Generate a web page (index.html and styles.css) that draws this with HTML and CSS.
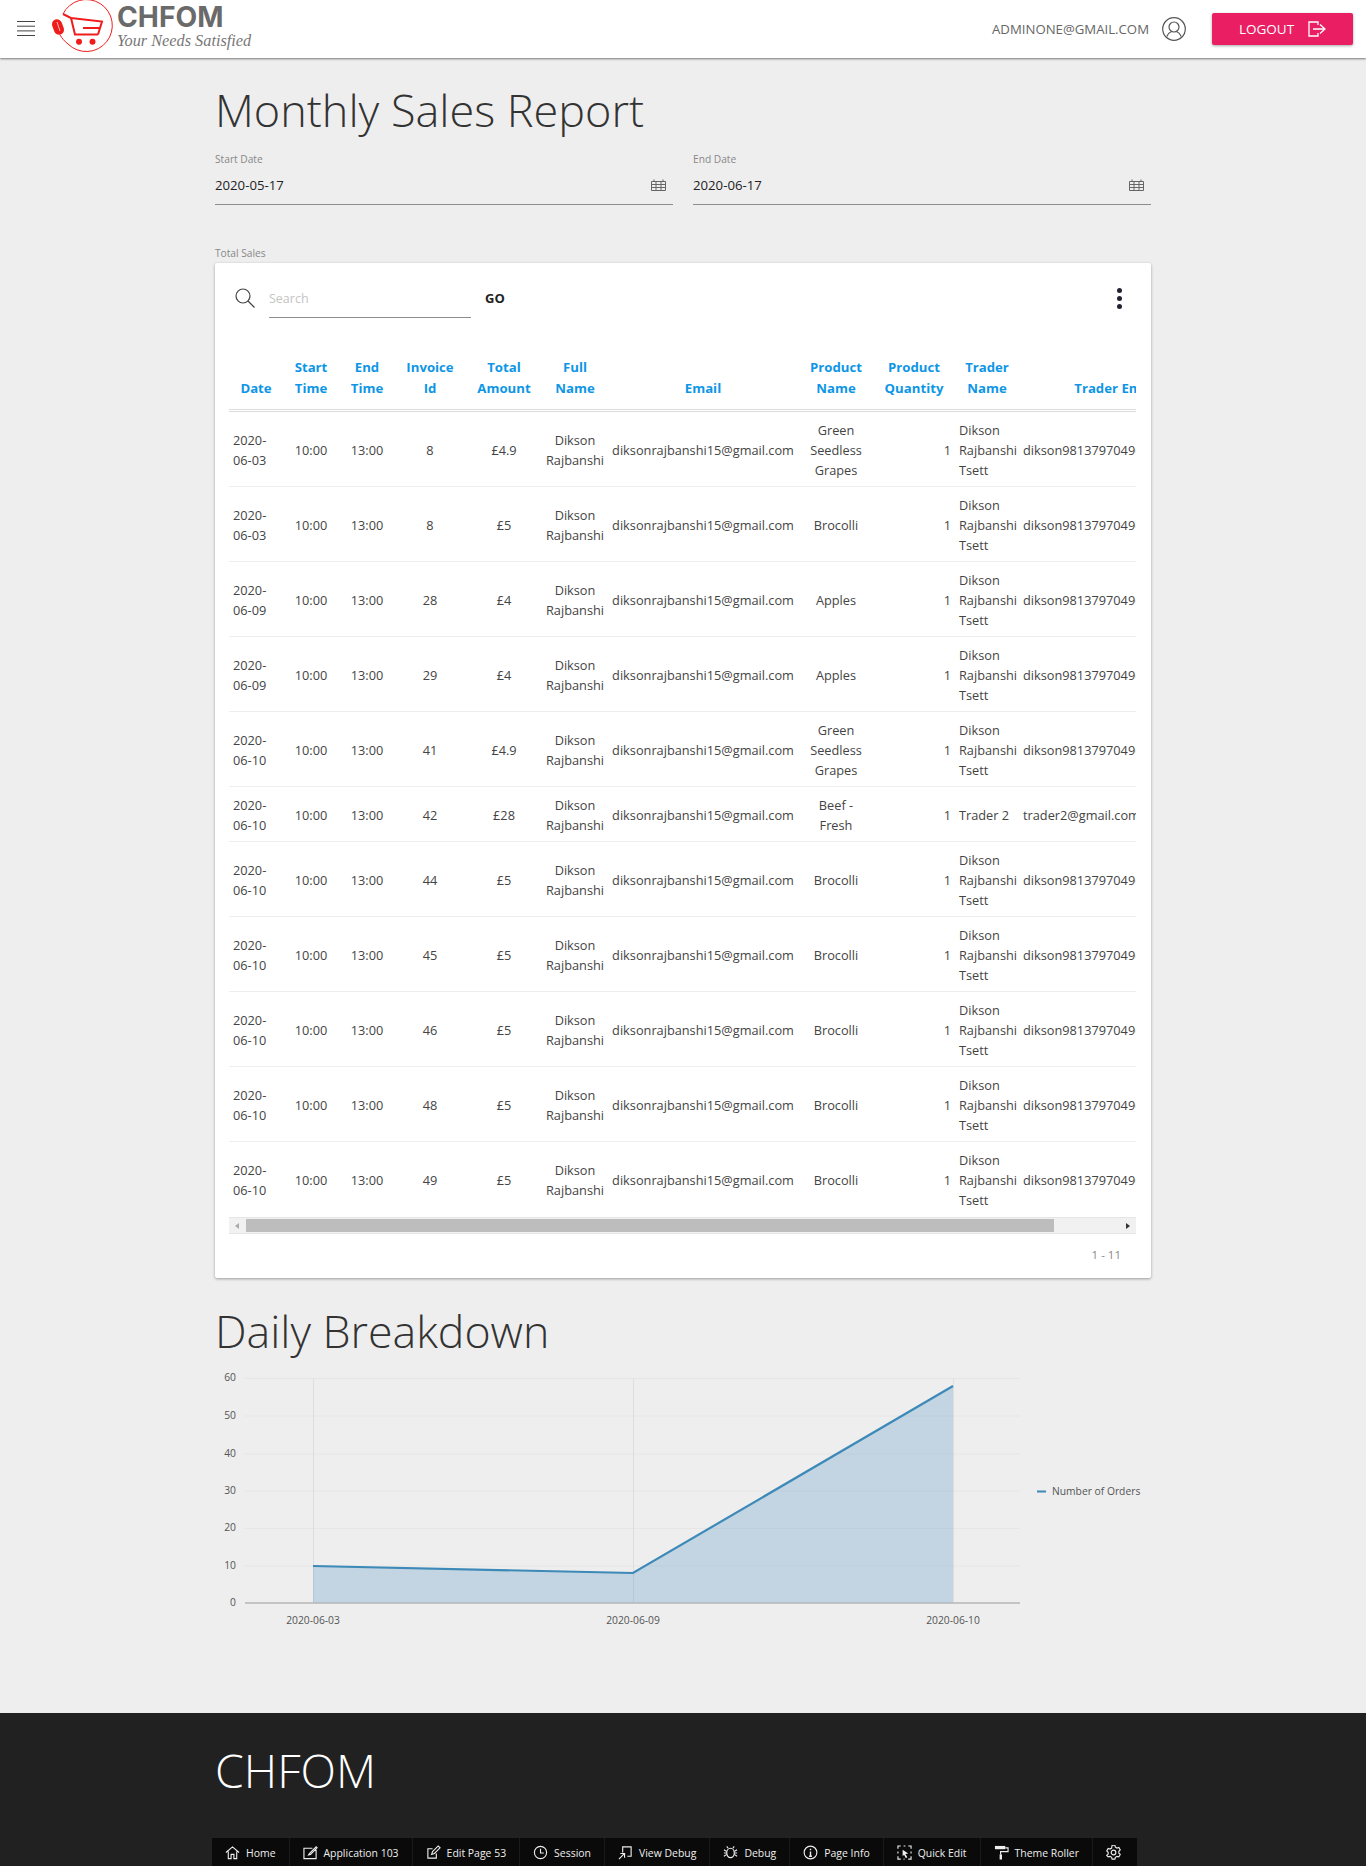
FILE: index.html
```html
<!DOCTYPE html>
<html lang="en">
<head>
<meta charset="utf-8">
<title>Monthly Sales Report</title>
<link rel="stylesheet" href="styles.css">
</head>
<body>
<header class="topbar">
  <svg class="burger" viewBox="0 0 18 16" width="18" height="16"><path d="M0 .5h18M0 5.200h18M0 9.900h18M0 14.500h18" stroke="#444" stroke-width="1"/></svg>
  <svg class="logo-mark" viewBox="0 0 70 58" width="70" height="58">
    <path d="M13 14A26 26 0 1 1 18 44C14 41 12 38 10 35" fill="none" stroke="#f01c1c" stroke-width="1"/>
    <path d="M13 14l8 4 4 16.500h23M21 18l31 3.500-4 13M31 21.500v0M33 28h17" fill="none" stroke="#f01c1c" stroke-width="2"/>
    <circle cx="29" cy="41.700" r="3" fill="#f01c1c"/><circle cx="42.500" cy="41.700" r="3" fill="#f01c1c"/>
    <rect x="3" y="19" width="10" height="16" rx="5" fill="#f01c1c" transform="rotate(-20 8 27)"/>
    <path d="M7 22l3 9" fill="none" stroke="#fff" stroke-width=".7"/>
  </svg>
  <div class="logo-text">
    <span class="logo-name">CHFOM</span>
    <span class="logo-tag">Your Needs Satisfied</span>
  </div>
  <span class="user-mail">ADMINONE@GMAIL.COM</span>
  <svg class="user-icon" viewBox="0 0 24 24" width="24" height="24" fill="none" stroke="#555" stroke-width="1.200"><circle cx="12" cy="12" r="11.300"/><circle cx="12" cy="10" r="5"/><path d="M4.800 19.500c1-3 3.500-4.500 4.700-5M19.200 19.500c-1-3-3.500-4.500-4.700-5"/></svg>
  <button class="logout">LOGOUT
    <svg viewBox="0 0 18 16" width="18" height="16" fill="none" stroke="#fff" stroke-width="1.300"><path d="M10 4V1H1v14h9v-3"/><path d="M5 8h11M12 3.500L17 8l-5 4.500"/></svg>
  </button>
</header>

<main class="content">
  <h1 class="page-title">Monthly Sales Report</h1>
  <div class="date-row">
    <div class="field">
      <label class="field-label">Start Date</label>
      <div class="field-box"><span>2020-05-17</span>
        <svg viewBox="0 0 15 12" width="15" height="12" fill="none" stroke="#666" stroke-width="1"><path d="M.5 2.500h14v9H.5zM.5 5.500h14M.5 8.500h14M5 2.500v9M10 2.500v9M3 .5v2M12 .5v2"/></svg>
      </div>
    </div>
    <div class="field">
      <label class="field-label">End Date</label>
      <div class="field-box"><span>2020-06-17</span>
        <svg viewBox="0 0 15 12" width="15" height="12" fill="none" stroke="#666" stroke-width="1"><path d="M.5 2.500h14v9H.5zM.5 5.500h14M.5 8.500h14M5 2.500v9M10 2.500v9M3 .5v2M12 .5v2"/></svg>
      </div>
    </div>
  </div>

  <div class="region-label">Total Sales</div>
  <section class="card">
    <div class="toolbar">
      <svg class="search-icon" viewBox="0 0 20 20" width="20" height="20" fill="none" stroke="#444" stroke-width="1.200"><circle cx="8" cy="8" r="7"/><path d="M13 13l6.500 6.500"/></svg>
      <span class="search-input">Search</span>
      <span class="go">GO</span>
      <span class="kebab"><i></i><i></i><i></i></span>
    </div>
    <div class="table-wrap">
      <table class="report">
        <colgroup>
          <col class="c-date"><col class="c-time"><col class="c-time"><col class="c-inv"><col class="c-amt"><col class="c-name"><col class="c-mail"><col class="c-prod"><col class="c-qty"><col class="c-name"><col class="c-tmail">
        </colgroup>
        <thead>
          <tr><th>Date</th><th>Start Time</th><th>End Time</th><th>Invoice Id</th><th>Total Amount</th><th>Full Name</th><th>Email</th><th>Product Name</th><th>Product Quantity</th><th>Trader Name</th><th>Trader Email</th></tr>
        </thead>
        <tbody>
          <tr><td class="l">2020-06-03</td><td>10:00</td><td>13:00</td><td>8</td><td>£4.9</td><td class="tight">Dikson Rajbanshi</td><td class="tight">diksonrajbanshi15@gmail.com</td><td>Green Seedless Grapes</td><td class="r">1</td><td class="l tn">Dikson Rajbanshi Tsett</td><td class="l">dikson9813797049@gmail.com</td></tr>
          <tr><td class="l">2020-06-03</td><td>10:00</td><td>13:00</td><td>8</td><td>£5</td><td class="tight">Dikson Rajbanshi</td><td class="tight">diksonrajbanshi15@gmail.com</td><td>Brocolli</td><td class="r">1</td><td class="l tn">Dikson Rajbanshi Tsett</td><td class="l">dikson9813797049@gmail.com</td></tr>
          <tr><td class="l">2020-06-09</td><td>10:00</td><td>13:00</td><td>28</td><td>£4</td><td class="tight">Dikson Rajbanshi</td><td class="tight">diksonrajbanshi15@gmail.com</td><td>Apples</td><td class="r">1</td><td class="l tn">Dikson Rajbanshi Tsett</td><td class="l">dikson9813797049@gmail.com</td></tr>
          <tr><td class="l">2020-06-09</td><td>10:00</td><td>13:00</td><td>29</td><td>£4</td><td class="tight">Dikson Rajbanshi</td><td class="tight">diksonrajbanshi15@gmail.com</td><td>Apples</td><td class="r">1</td><td class="l tn">Dikson Rajbanshi Tsett</td><td class="l">dikson9813797049@gmail.com</td></tr>
          <tr><td class="l">2020-06-10</td><td>10:00</td><td>13:00</td><td>41</td><td>£4.9</td><td class="tight">Dikson Rajbanshi</td><td class="tight">diksonrajbanshi15@gmail.com</td><td>Green Seedless Grapes</td><td class="r">1</td><td class="l tn">Dikson Rajbanshi Tsett</td><td class="l">dikson9813797049@gmail.com</td></tr>
          <tr><td class="l">2020-06-10</td><td>10:00</td><td>13:00</td><td>42</td><td>£28</td><td class="tight">Dikson Rajbanshi</td><td class="tight">diksonrajbanshi15@gmail.com</td><td>Beef - Fresh</td><td class="r">1</td><td class="l tn">Trader 2</td><td class="l">trader2@gmail.com</td></tr>
          <tr><td class="l">2020-06-10</td><td>10:00</td><td>13:00</td><td>44</td><td>£5</td><td class="tight">Dikson Rajbanshi</td><td class="tight">diksonrajbanshi15@gmail.com</td><td>Brocolli</td><td class="r">1</td><td class="l tn">Dikson Rajbanshi Tsett</td><td class="l">dikson9813797049@gmail.com</td></tr>
          <tr><td class="l">2020-06-10</td><td>10:00</td><td>13:00</td><td>45</td><td>£5</td><td class="tight">Dikson Rajbanshi</td><td class="tight">diksonrajbanshi15@gmail.com</td><td>Brocolli</td><td class="r">1</td><td class="l tn">Dikson Rajbanshi Tsett</td><td class="l">dikson9813797049@gmail.com</td></tr>
          <tr><td class="l">2020-06-10</td><td>10:00</td><td>13:00</td><td>46</td><td>£5</td><td class="tight">Dikson Rajbanshi</td><td class="tight">diksonrajbanshi15@gmail.com</td><td>Brocolli</td><td class="r">1</td><td class="l tn">Dikson Rajbanshi Tsett</td><td class="l">dikson9813797049@gmail.com</td></tr>
          <tr><td class="l">2020-06-10</td><td>10:00</td><td>13:00</td><td>48</td><td>£5</td><td class="tight">Dikson Rajbanshi</td><td class="tight">diksonrajbanshi15@gmail.com</td><td>Brocolli</td><td class="r">1</td><td class="l tn">Dikson Rajbanshi Tsett</td><td class="l">dikson9813797049@gmail.com</td></tr>
          <tr class="last"><td class="l">2020-06-10</td><td>10:00</td><td>13:00</td><td>49</td><td>£5</td><td class="tight">Dikson Rajbanshi</td><td class="tight">diksonrajbanshi15@gmail.com</td><td>Brocolli</td><td class="r">1</td><td class="l tn">Dikson Rajbanshi Tsett</td><td class="l">dikson9813797049@gmail.com</td></tr>
        </tbody>
      </table>
    </div>
    <div class="scrollbar">
      <span class="arrow-l"></span>
      <span class="track"><span class="thumb"></span></span>
      <span class="arrow-r"></span>
    </div>
    <div class="pager">1 - 11</div>
  </section>

  <h2 class="page-title section-title">Daily Breakdown</h2>
  <svg class="chart" viewBox="215 1370 936 270" width="936" height="270">
    <g stroke="#e6e6e6" stroke-width="1">
      <path d="M245 1378.500H1020M245 1416H1020M245 1454H1020M245 1491H1020M245 1528.500H1020M245 1566H1020"/>
    </g>
    <path d="M313.500 1378V1603M633.500 1378V1603M953.500 1378V1603" stroke="#dcdde0" stroke-width="1"/>
    <path d="M313 1566L633 1573L953 1386V1603H313Z" fill="#3580b8" fill-opacity=".23"/>
    <path d="M313 1566L633 1573L953 1386" fill="none" stroke="#3d89b8" stroke-width="2.200"/>
    <path d="M245 1603H1020" stroke="#b4b6b9" stroke-width="1.500"/>
    <g class="axis-y">
      <text x="236" y="1381">60</text><text x="236" y="1419">50</text><text x="236" y="1457">40</text><text x="236" y="1494">30</text><text x="236" y="1531">20</text><text x="236" y="1569">10</text><text x="236" y="1606">0</text>
    </g>
    <g class="axis-x">
      <text x="313" y="1624">2020-06-03</text><text x="633" y="1624">2020-06-09</text><text x="953" y="1624">2020-06-10</text>
    </g>
    <path d="M1037 1491.500h9" stroke="#3d89b8" stroke-width="2"/>
    <text class="legend" x="1052" y="1495">Number of Orders</text>
  </svg>
</main>

<footer class="footer">
  <div class="footer-inner">
    <h2 class="page-title footer-title">CHFOM</h2>
    <nav class="devbar">
      <a><svg viewBox="0 0 16 16" width="15" height="15"><path d="M1 8l7-6 7 6M3.500 7v7.500h3V10h3v4.500h3V7"/></svg>Home</a>
      <a><svg viewBox="0 0 16 16" width="15" height="15"><path d="M14 5v9.500H1V3.500h9M7 9l7-7 1 1-7 7-2 .5z"/></svg>Application 103</a>
      <a><svg viewBox="0 0 16 16" width="15" height="15"><path d="M11 9v5H2V4h5M6 10l1-3 6-6 2 2-6 6z"/></svg>Edit Page 53</a>
      <a><svg viewBox="0 0 16 16" width="15" height="15"><circle cx="8" cy="8" r="6.500"/><path d="M8 4v4.500h3.500"/></svg>Session</a>
      <a><svg viewBox="0 0 16 16" width="15" height="15"><path d="M5 8V2h9v10h-4M1 15l6-6M2.500 9H7v4.500"/></svg>View Debug</a>
      <a><svg viewBox="0 0 16 16" width="15" height="15"><ellipse cx="8" cy="8.500" rx="4" ry="5"/><path d="M5.500 3.500L4 1.500M10.500 3.500L12 1.500M4 7L1 5M12 7l3-2M4 10l-3 2M12 10l3 2M1 8.500h3M12 8.500h3"/></svg>Debug</a>
      <a><svg viewBox="0 0 16 16" width="15" height="15"><circle cx="8" cy="8" r="6.800"/><path d="M8 7v5M8 4v1.500M6.500 12h3" stroke-width="1.500"/></svg>Page Info</a>
      <a><svg viewBox="0 0 16 16" width="15" height="15"><path d="M1 4V1h3M12 1h3v3M15 12v3h-3M4 15H1v-3M1 7v2M15 7v2M7 1h2M7 15h1"/><path class="solid" d="M6 5l6 4-3 .5 2 3.500-1.500 1-2-3.500L6 12z"/></svg>Quick Edit</a>
      <a><svg viewBox="0 0 16 16" width="15" height="15"><path class="solid" d="M1 1h11v3.500H1z"/><path d="M12 3h3v4H7v3"/><path class="solid" d="M6 10h2.500v5.500H6z"/></svg>Theme Roller</a>
      <a class="gear"><svg viewBox="0 0 16 16" width="15" height="15"><path d="M6.500 1h3l.5 2 1.700 1 2-.6 1.500 2.600-1.500 1.400v2l1.500 1.400-1.500 2.600-2-.6-1.700 1-.5 2h-3l-.5-2-1.700-1-2 .6L.8 11.800l1.500-1.400v-2L.8 7 2.300 4.400l2 .6L6 4z" transform="translate(0 -.700)"/><circle cx="8" cy="8" r="2.500"/></svg></a>
    </nav>
  </div>
</footer>
</body>
</html>
```
FILE: styles.css
```css
* { box-sizing: border-box; }
html, body { margin: 0; padding: 0; }
body {
  background: #eee;
  color: #444;
  font-family: "Open Sans", "Liberation Sans", sans-serif;
  font-size: 12.750px;
  height: 1866px;
  overflow: hidden;
}

/* top bar */
.topbar {
  height: 58px;
  background: #fff;
  box-shadow: 0 1px 2px rgba(0,0,0,.5);
  display: flex;
  align-items: center;
  padding: 0 13px 0 17px;
}
.burger { margin-right: 15px; }
.logo-mark { flex: none; }
.logo-text { display: flex; flex-direction: column; margin: -3px 0 0 -3px; }
.logo-name {
  font-family: Inter, "Open Sans", sans-serif;
  font-weight: 700;
  font-size: 28.200px;
  line-height: 27px;
  color: #6a6a6a;
}
.logo-tag {
  font-family: "Liberation Serif", serif;
  font-style: italic;
  font-size: 16.300px;
  line-height: 20px;
  color: #777;
  white-space: nowrap;
}
.user-mail { margin-left: auto; font-size: 13.200px; color: #666; }
.user-icon { margin-left: 13px; }
.logout {
  margin-left: 26px;
  width: 141px;
  height: 32px;
  border: 0;
  border-radius: 2px;
  background: #ea1f63;
  color: #fff;
  font-family: inherit;
  font-size: 13.500px;
  display: flex;
  align-items: center;
  justify-content: center;
  gap: 14px;
  box-shadow: 0 1px 3px rgba(0,0,0,.35);
}

/* content */
.content { width: 936px; margin: 0 auto; }
.page-title {
  margin: 20px 0 0;
  font-weight: 300;
  font-size: 45px;
  line-height: 64px;
  color: #333;
}
.date-row { display: grid; grid-template-columns: 458px 458px; column-gap: 20px; margin-top: 10px; }
.field-label, .region-label { display: block; font-size: 10.200px; line-height: 14px; color: #888; }
.field-box {
  height: 39px;
  display: flex;
  align-items: center;
  justify-content: space-between;
  padding-right: 7px;
  border-bottom: 1px solid #8d8d8d;
  color: #222;
  font-size: 13.200px;
}
.region-label { margin-top: 41px; }

/* card */
.card {
  margin-top: 3px;
  height: 1015px;
  background: #fff;
  padding: 0 15px 0 14px;
  border-radius: 2px;
  box-shadow: 0 1px 3px rgba(0,0,0,.35);
}
.toolbar { height: 84px; display: flex; align-items: center; padding: 0 0 14px 6px; }
.search-icon { flex: none; }
.search-input {
  width: 202px;
  height: 33px;
  margin-left: 14px;
  border-bottom: 1px solid #8d8d8d;
  color: #c4c4c4;
  font-size: 12.500px;
  line-height: 28px;
  margin-top: 7px;
}
.go { margin-left: 14px; font-weight: 700; font-size: 13px; color: #222; }
.kebab { margin-left: auto; margin-right: 14px; display: flex; flex-direction: column; gap: 3px; }
.kebab i { display: block; width: 5px; height: 5px; border-radius: 50%; background: #223; }

.table-wrap { overflow: hidden; }
.report { table-layout: fixed; width: 984px; border-collapse: separate; border-spacing: 0; }
.c-date { width: 54px; } .c-time { width: 56px; } .c-inv { width: 70px; } .c-amt { width: 78px; }
.c-name { width: 64px; } .c-mail { width: 192px; } .c-prod { width: 74px; } .c-qty { width: 82px; } .c-tmail { width: 194px; }
.report th {
  padding: 10px 4px 10px;
  font-size: 13.200px;
  line-height: 21px;
  font-weight: 700;
  color: #0e96e6;
  text-align: center;
  vertical-align: bottom;
  border-bottom: 3px double #dcdcdc;
}
.report td {
  padding: 8px 4px 6px;
  line-height: 20px;
  text-align: center;
  vertical-align: middle;
  border-bottom: 1px solid #eee;
  color: #444;
}
.report td.l { text-align: left; }
.report td.r { text-align: right; padding-right: 4px; }
.report td.tn { padding-right: 0; }
.report td.tight { padding-left: 0; padding-right: 0; }
.report .last td { border-bottom: 0; padding-bottom: 7px; }

.scrollbar { height: 17px; display: flex; background: #f1f1f1; border-top: 1px solid #e6e6e6; border-bottom: 1px solid #e6e6e6; }
.arrow-l, .arrow-r { width: 17px; flex: none; position: relative; }
.arrow-l::before, .arrow-r::before {
  content: "";
  position: absolute;
  top: 5px;
  border: 3px solid transparent;
}
.arrow-l::before { left: 3px; border-right: 4px solid #aaa; }
.arrow-r::before { left: 7px; border-left: 4px solid #333; }
.track { flex: 1; }
.thumb { display: block; width: 808px; height: 13px; margin-top: 1px; background: #bdbdbd; }
.pager { height: 44px; line-height: 42px; text-align: right; padding-right: 15px; font-size: 11.500px; color: #888; }

.section-title { margin-top: 21px; font-size: 44.700px; }
.chart { display: block; margin-top: 7px; }
.chart text { font-family: "Open Sans", sans-serif; font-size: 10.300px; fill: #555; }
.axis-y text { text-anchor: end; }
.axis-x text { text-anchor: middle; }

/* footer */
.footer { margin-top: 73px; height: 153px; background: #212121; }
.footer-inner { width: 936px; margin: 0 auto; padding-top: 25px; }
.footer-title { margin: 0; color: #fff; font-size: 46.400px; }
.devbar {
  width: 925px;
  height: 28px;
  margin: 36px 0 0 -3px;
  background: #0a0a0a;
  display: flex;
  align-items: center;
}
.devbar a {
  height: 28px;
  display: flex;
  align-items: center;
  gap: 6px;
  padding: 1px 13px 0;
  font-size: 10.450px;
  color: #eee;
  border-right: 1px solid #1a1a1a;
  white-space: nowrap;
}
.devbar a.gear { border-right: 0; }
.devbar svg { fill: none; stroke: #eee; stroke-width: 1.200; flex: none; }
.devbar svg .solid { fill: #eee; stroke: none; }
```
